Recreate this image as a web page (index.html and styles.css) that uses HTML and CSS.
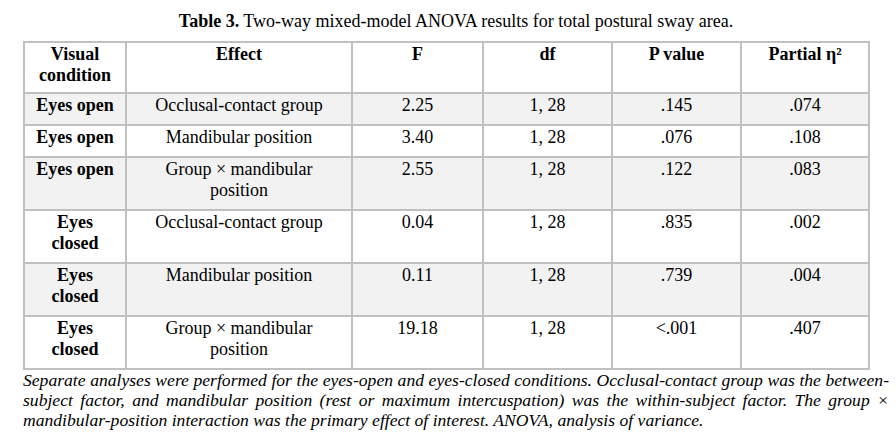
FILE: index.html
```html
<!DOCTYPE html>
<html>
<head>
<meta charset="utf-8">
<link rel="stylesheet" href="styles.css">
</head>
<body>
<div class="wrap">
  <p class="caption"><b>Table 3.</b> Two-way mixed-model ANOVA results for total postural sway area.</p>
  <table class="anova">
    <colgroup>
      <col class="c1"><col class="c2"><col class="c3"><col class="c4"><col class="c5"><col class="c6">
    </colgroup>
    <thead>
      <tr>
        <th>Visual<br>condition</th>
        <th>Effect</th>
        <th>F</th>
        <th>df</th>
        <th>P value</th>
        <th>Partial η²</th>
      </tr>
    </thead>
    <tbody>
      <tr class="shade">
        <th>Eyes open</th><td>Occlusal-contact group</td><td>2.25</td><td>1, 28</td><td>.145</td><td>.074</td>
      </tr>
      <tr>
        <th>Eyes open</th><td>Mandibular position</td><td>3.40</td><td>1, 28</td><td>.076</td><td>.108</td>
      </tr>
      <tr class="shade">
        <th>Eyes open</th><td>Group × mandibular<br>position</td><td>2.55</td><td>1, 28</td><td>.122</td><td>.083</td>
      </tr>
      <tr>
        <th>Eyes<br>closed</th><td>Occlusal-contact group</td><td>0.04</td><td>1, 28</td><td>.835</td><td>.002</td>
      </tr>
      <tr class="shade">
        <th>Eyes<br>closed</th><td>Mandibular position</td><td>0.11</td><td>1, 28</td><td>.739</td><td>.004</td>
      </tr>
      <tr>
        <th>Eyes<br>closed</th><td>Group × mandibular<br>position</td><td>19.18</td><td>1, 28</td><td>&lt;.001</td><td>.407</td>
      </tr>
    </tbody>
  </table>
  <p class="note">Separate analyses were performed for the eyes-open and eyes-closed conditions. Occlusal-contact group was the between-subject factor, and mandibular position (rest or maximum intercuspation) was the within-subject factor. The group × mandibular-position interaction was the primary effect of interest. ANOVA, analysis of variance.</p>
</div>
</body>
</html>
```
FILE: styles.css
```css
html, body {
  margin: 0;
  padding: 0;
  background: #ffffff;
}
body {
  font-family: "Liberation Serif", serif;
  font-size: 18px;
  line-height: 21px;
  color: #000000;
}
.wrap {
  width: 866px;
  padding: 11px 0 0 23px;
}
.caption {
  margin: 0 0 9px 0;
  text-align: center;
}
.anova {
  border-collapse: collapse;
  table-layout: fixed;
  width: 847px;
  border: 2px solid #c0c0c0;
}
.c1 { width: 102px; }
.c2 { width: 226px; }
.c3 { width: 131px; }
.c4 { width: 129px; }
.c5 { width: 129px; }
.c6 { width: 128px; }
.anova th,
.anova td {
  border: 2px solid #c0c0c0;
  padding: 1px 2px 8px;
  vertical-align: top;
  text-align: center;
  font-weight: normal;
}
.anova th {
  font-weight: bold;
}
.anova thead th {
  padding-bottom: 6px;
}
.anova tr.shade {
  background: #f2f2f2;
}
.note {
  margin: 0;
  font-size: 17.6px;
  line-height: 20px;
  font-style: italic;
  text-align: justify;
}
```
